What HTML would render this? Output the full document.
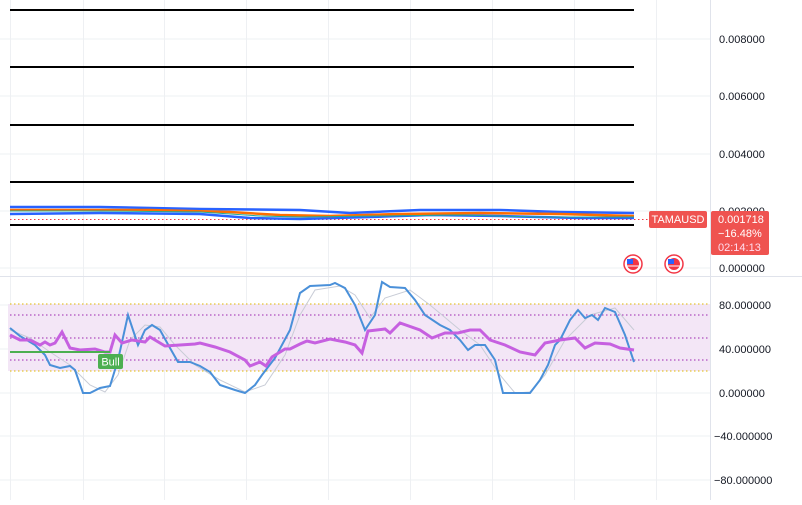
<!DOCTYPE html>
<html><head><style>
body{margin:0;background:#fff;width:802px;height:500px;overflow:hidden;font-family:"Liberation Sans",sans-serif}
</style></head><body>
<svg width="802" height="500" viewBox="0 0 802 500" xmlns="http://www.w3.org/2000/svg" font-family="Liberation Sans, sans-serif">
<rect width="802" height="500" fill="#fff"/>
<g stroke="#eef0f3" stroke-width="1">
<line x1="10.5" y1="0" x2="10.5" y2="500"/><line x1="83.5" y1="0" x2="83.5" y2="500"/><line x1="164.5" y1="0" x2="164.5" y2="500"/><line x1="246.5" y1="0" x2="246.5" y2="500"/><line x1="328.5" y1="0" x2="328.5" y2="500"/><line x1="410.5" y1="0" x2="410.5" y2="500"/><line x1="492.5" y1="0" x2="492.5" y2="500"/><line x1="574.5" y1="0" x2="574.5" y2="500"/><line x1="656.5" y1="0" x2="656.5" y2="500"/>
<line x1="0" y1="39" x2="710" y2="39"/><line x1="0" y1="96" x2="710" y2="96"/><line x1="0" y1="154" x2="710" y2="154"/><line x1="0" y1="211" x2="710" y2="211"/><line x1="0" y1="268" x2="710" y2="268"/>
<line x1="0" y1="305" x2="710" y2="305"/><line x1="0" y1="349" x2="710" y2="349"/><line x1="0" y1="393" x2="710" y2="393"/><line x1="0" y1="436" x2="710" y2="436"/><line x1="0" y1="480" x2="710" y2="480"/>
</g>
<line x1="0" y1="276.5" x2="802" y2="276.5" stroke="#e0e3eb"/>
<line x1="710.5" y1="0" x2="710.5" y2="500" stroke="#e0e3eb"/>
<g stroke="#000" stroke-width="2">
<line x1="10" y1="10" x2="634" y2="10"/><line x1="10" y1="67" x2="634" y2="67"/><line x1="10" y1="125" x2="634" y2="125"/><line x1="10" y1="182" x2="634" y2="182"/><line x1="10" y1="225" x2="634" y2="225"/>
</g>
<line x1="10" y1="219.5" x2="650" y2="219.5" stroke="#f23645" stroke-dasharray="1.5 2.5"/>
<polyline fill="none" stroke="#2962ff" stroke-width="2.5" points="10,207 100,207 200,209 300,210 350,213 420,210 500,210 560,212 634,213"/>
<polyline fill="none" stroke="#2962ff" stroke-width="2.5" points="10,214 100,213 200,214 250,218 300,219 370,217 430,215 500,216 580,218 634,218"/>
<polyline fill="none" stroke="#ff6d00" stroke-width="2.5" points="10,210 150,210 230,212 280,215 330,216 400,214 480,213 560,214 634,216"/>
<polyline fill="none" stroke="#22ab94" stroke-width="1" points="10,211 100,211 200,212 260,216 300,217 380,216 460,215 540,217 634,217"/>
<rect x="8" y="304" width="702" height="67" fill="#f3e6f6"/>
<g stroke-dasharray="1.5 2.5" stroke-width="1">
<line x1="10" y1="304" x2="710" y2="304" stroke="#e0b800"/><line x1="10" y1="371" x2="710" y2="371" stroke="#e0b800"/>
<line x1="10" y1="315" x2="710" y2="315" stroke="#9c27b0"/><line x1="10" y1="338" x2="710" y2="338" stroke="#9c27b0"/><line x1="10" y1="360" x2="710" y2="360" stroke="#9c27b0"/>
</g>
<polyline fill="none" stroke="#c8ccd6" stroke-width="1" points="10,330 30,338 50,352 70,365 90,385 105,392 118,375 130,340 145,325 160,327 175,345 195,365 220,380 245,392 265,385 285,355 300,315 315,290 340,286 355,295 370,318 385,298 410,290 430,305 460,330 480,345 500,375 515,393 530,392 545,375 565,340 590,315 615,308 634,330"/>
<polyline fill="none" stroke="#4a90d9" stroke-width="2" points="10,328 20,336 35,345 45,355 50,365 60,368 70,366 75,370 83,393 90,393 100,388 110,386 118,360 128,315 138,345 145,330 152,325 160,330 170,348 178,362 190,362 200,366 210,372 220,385 235,390 245,393 255,385 262,375 275,358 290,330 300,293 310,286 330,285 335,283 345,288 355,305 365,330 375,315 382,282 390,287 405,288 415,300 425,315 440,325 450,330 460,340 468,350 475,345 485,345 495,360 503,393 530,393 540,380 548,365 555,345 560,340 570,320 578,310 585,318 592,315 598,320 605,308 615,312 625,335 634,362"/>
<polyline fill="none" stroke="#c660e0" stroke-width="3" points="10,335 20,340 30,340 40,345 45,342 50,345 55,343 62,332 70,348 80,350 95,349 105,352 110,352 115,335 122,343 132,340 145,342 150,337 165,346 180,345 195,344 200,343 215,347 230,352 245,360 250,366 260,362 266,366 272,357 285,349 290,349 300,344 307,341 315,343 330,339 345,342 355,345 362,353 368,331 385,329 390,333 400,323 420,330 432,338 445,333 458,333 470,330 480,330 490,340 505,345 520,352 535,355 545,343 560,340 575,338 585,348 595,343 610,344 620,348 634,350"/>
<line x1="10" y1="352" x2="110" y2="352" stroke="#4caf50" stroke-width="2"/>
<rect x="98" y="354" width="25" height="15" rx="2" fill="#4caf50"/>
<text x="110.5" y="365.5" font-size="11" fill="#fff" text-anchor="middle">Bull</text>
<g font-size="11" fill="#131722">
<text x="719" y="43">0.008000</text><text x="719" y="100">0.006000</text><text x="719" y="158">0.004000</text><text x="719" y="215">0.002000</text><text x="719" y="272">0.000000</text>
<text x="719" y="309">80.000000</text><text x="719" y="353">40.000000</text><text x="719" y="397">0.000000</text><text x="714" y="440">−40.000000</text><text x="714" y="484">−80.000000</text>
</g>
<rect x="649" y="211" width="58" height="17" rx="2" fill="#ef5350"/>
<text x="678" y="223" font-size="11" fill="#fff" text-anchor="middle">TAMAUSD</text>
<rect x="711" y="211" width="58" height="44" rx="2" fill="#ef5350"/>
<text x="718" y="223" font-size="11" fill="#fff">0.001718</text>
<text x="718" y="237" font-size="11" fill="#fff">−16.48%</text>
<text x="718" y="251" font-size="11" fill="#fde">02:14:13</text>
<g>
<circle cx="633" cy="264" r="9" fill="#fff" stroke="#f23645" stroke-width="1.5"/>
<circle cx="633" cy="264" r="6" fill="#f23645"/><rect x="627" y="259" width="6" height="5" fill="#2962ff"/><line x1="627" y1="266" x2="639" y2="266" stroke="#fff"/>
<circle cx="674" cy="264" r="9" fill="#fff" stroke="#f23645" stroke-width="1.5"/>
<circle cx="674" cy="264" r="6" fill="#f23645"/><rect x="668" y="259" width="6" height="5" fill="#2962ff"/><line x1="668" y1="266" x2="680" y2="266" stroke="#fff"/>
</g>
</svg>
</body></html>
